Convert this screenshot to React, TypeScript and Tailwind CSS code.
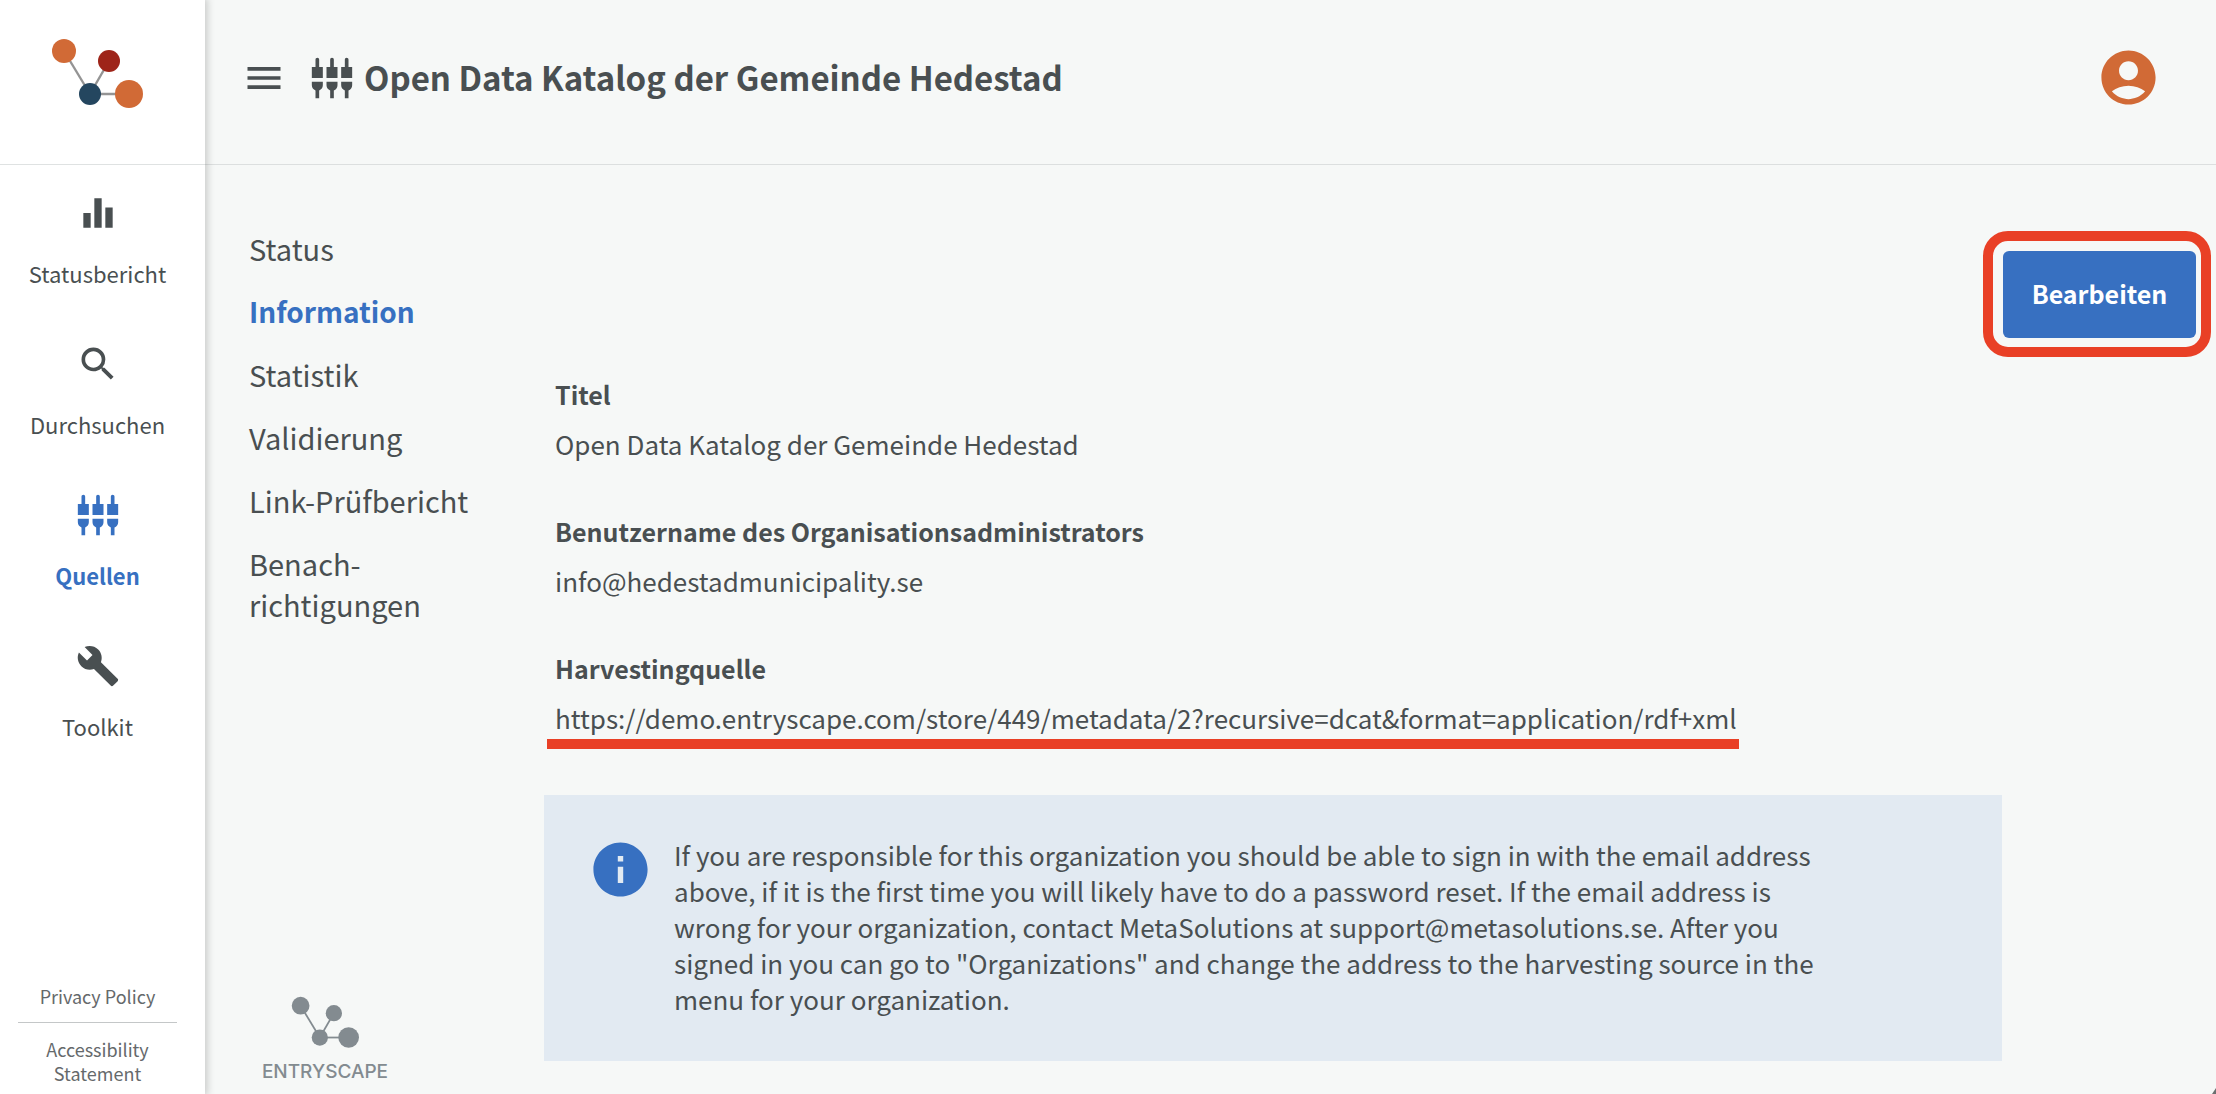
import type { ReactNode } from "react";
import {
  MdBuild,
  MdEqualizer,
  MdInfo,
  MdMenu,
  MdSearch,
  MdSettingsInputComponent,
} from "react-icons/md";

type NetworkColors = { line: string; a: string; b: string; c: string; d: string };

function NetworkMark({ className, colors }: { className: string; colors: NetworkColors }) {
  return (
    <svg viewBox="0 0 92 70" className={className} aria-hidden="true">
      <g stroke={colors.line} strokeWidth="2.4">
        <path d="M13 13 39 56" />
        <path d="M58 23 39 56" />
        <path d="M39 56h39" />
      </g>
      <circle cx="13" cy="13" r="12" fill={colors.a} />
      <circle cx="58" cy="23" r="11" fill={colors.b} />
      <circle cx="39" cy="56" r="11" fill={colors.c} />
      <circle cx="78" cy="56" r="14" fill={colors.d} />
    </svg>
  );
}

function AccountIcon() {
  return (
    <svg viewBox="0 0 24 24" className="size-[65px]" fill="currentColor" aria-hidden="true">
      <path d="M12 2C6.48 2 2 6.48 2 12s4.48 10 10 10 10-4.48 10-10S17.52 2 12 2zm0 4c1.93 0 3.5 1.57 3.5 3.5S13.93 13 12 13s-3.5-1.57-3.5-3.5S10.07 6 12 6zm0 14c-2.03 0-4.43-.82-6.14-2.88C7.55 15.8 9.68 15 12 15s4.45.8 6.14 2.12C16.43 19.18 14.03 20 12 20z" />
    </svg>
  );
}

const modules = [
  { label: "Statusbericht", icon: <MdEqualizer />, active: false },
  { label: "Durchsuchen", icon: <MdSearch />, active: false },
  { label: "Quellen", icon: <MdSettingsInputComponent />, active: true },
  { label: "Toolkit", icon: <MdBuild />, active: false },
];

const sections: { id: string; label: ReactNode }[] = [
  { id: "status", label: "Status" },
  { id: "information", label: "Information" },
  { id: "statistik", label: "Statistik" },
  { id: "validierung", label: "Validierung" },
  { id: "link-pruefbericht", label: "Link-Prüfbericht" },
  {
    id: "benachrichtigungen",
    label: (
      <>
        Benach-
        <br />
        richtigungen
      </>
    ),
  },
];

function Sidebar() {
  return (
    <aside className="z-10 flex w-[205px] shrink-0 flex-col bg-white shadow-[0_0_8px_2px_rgba(0,0,0,0.2)]">
      <a
        href="#home"
        aria-label="EntryScape"
        className="flex h-[165px] justify-center border-b border-[#dfe2e2] pt-[38px] pr-3"
      >
        <NetworkMark
          className="h-[70px] w-[92px]"
          colors={{ line: "#949494", a: "#d16a36", b: "#9e2419", c: "#24465f", d: "#d16a36" }}
        />
      </a>
      <nav className="flex flex-col pt-[26px] pr-[10px]">
        {modules.map((m) => (
          <a
            key={m.label}
            href={"#" + m.label}
            className={
              m.active
                ? "flex h-[151px] flex-col items-center gap-5 text-[22px] leading-9 font-bold text-[#3770c1]"
                : "flex h-[151px] flex-col items-center gap-5 text-[22px] leading-9"
            }
          >
            <span className="text-[44px] leading-none">{m.icon}</span>
            {m.label}
          </a>
        ))}
      </nav>
      <footer className="mt-auto mr-[10px] flex flex-col px-[18px] pb-[9px] text-center text-lg leading-6 text-[#65696b]">
        <a href="#privacy" className="border-b border-[#c4c7c8] pb-[14px]">
          Privacy Policy
        </a>
        <a href="#accessibility" className="pt-[14px]">
          Accessibility Statement
        </a>
      </footer>
    </aside>
  );
}

function Field({ label, children }: { label: string; children: ReactNode }) {
  return (
    <div>
      <dt className="text-[25px] font-bold">{label}</dt>
      <dd className="pt-[14px]">{children}</dd>
    </div>
  );
}

export default function App() {
  return (
    <div className="relative flex min-h-screen bg-[#f6f8f7] font-['Noto_Sans_CJK_SC',sans-serif] text-[#494f51]">
      <Sidebar />
      <div className="flex min-w-0 flex-1 flex-col">
        <header className="flex h-[165px] items-start border-b border-[#dcdfdf] pt-[45px] pr-[55px] pl-[37px]">
          <div className="flex h-[66px] flex-1 items-center">
            <button type="button" aria-label="Menü" className="text-[44px]">
              <MdMenu />
            </button>
            <MdSettingsInputComponent className="ml-6 text-[44px]" />
            <h1 className="ml-[10px] pb-[2px] text-[33px] leading-[44px] font-bold">
              Open Data Katalog der Gemeinde Hedestad
            </h1>
          </div>
          <button type="button" aria-label="Konto" className="text-[#d16a36]">
            <AccountIcon />
          </button>
        </header>
        <div className="flex flex-1">
          <div className="flex w-[339px] shrink-0 flex-col pt-[52px] pl-11">
            <nav className="flex w-[240px] flex-col text-[29px] leading-[41px]">
              {sections.map((s) => (
                <a
                  key={s.id}
                  href={"#" + s.id}
                  className={
                    s.id === "information" ? "py-[11px] text-[28px] font-bold text-[#3770c1]" : "py-[11px]"
                  }
                >
                  {s.label}
                </a>
              ))}
            </nav>
            <div className="mt-auto ml-3 flex w-[128px] flex-col items-center self-start pb-[10px] text-[#838b90]">
              <NetworkMark
                className="h-[52px] w-[68px]"
                colors={{ line: "#838b90", a: "#838b90", b: "#838b90", c: "#838b90", d: "#838b90" }}
              />
              <span className="pt-3 font-['Inter',sans-serif] text-[19px] leading-6 font-medium">ENTRYSCAPE</span>
            </div>
          </div>
          <main className="min-w-0 flex-1 pb-[33px]">
            <div className="flex justify-end pt-[66px] pr-[5px]">
              <div className="rounded-[25px] border-10 border-[#e94026] p-[10px] pr-[5px] pb-[9px]">
                <button
                  type="button"
                  className="h-[87px] w-[193px] rounded-md bg-[#3770c1] pb-[2px] text-[25px] font-bold text-white"
                >
                  Bearbeiten
                </button>
              </div>
            </div>
            <dl className="flex flex-col gap-[51px] px-[11px] pt-[19px] text-[26px] leading-9">
              <Field label="Titel">Open Data Katalog der Gemeinde Hedestad</Field>
              <Field label="Benutzername des Organisationsadministrators">info@hedestadmunicipality.se</Field>
              <Field label="Harvestingquelle">
                <span className="-ml-2 inline-block border-b-10 border-[#e94026] pr-[2px] pb-[3px] pl-2 align-top">
                  https://demo.entryscape.com/store/449/metadata/2?recursive=dcat&amp;format=application/rdf+xml
                </span>
              </Field>
            </dl>
            <section className="mt-[46px] mr-[214px] flex bg-[#e2eaf2] px-11 pt-[42px] pb-11 text-[26px] leading-9">
              <MdInfo className="size-[65px] shrink-0 text-[#3770c1]" />
              <p className="ml-[21px] max-w-[1150px]">
                If you are responsible for this organization you should be able to sign in with the email address above,
                if it is the first time you will likely have to do a password reset. If the email address is wrong for
                your organization, contact MetaSolutions at support@metasolutions.se. After you signed in you can go to
                "Organizations" and change the address to the harvesting source in the menu for your organization.
              </p>
            </section>
          </main>
        </div>
      </div>
      <svg viewBox="0 0 4 6" className="absolute right-0 bottom-0 h-[6px] w-1" aria-hidden="true">
        <path d="M4 0v6H0z" fill="#6b6f70" />
      </svg>
    </div>
  );
}
